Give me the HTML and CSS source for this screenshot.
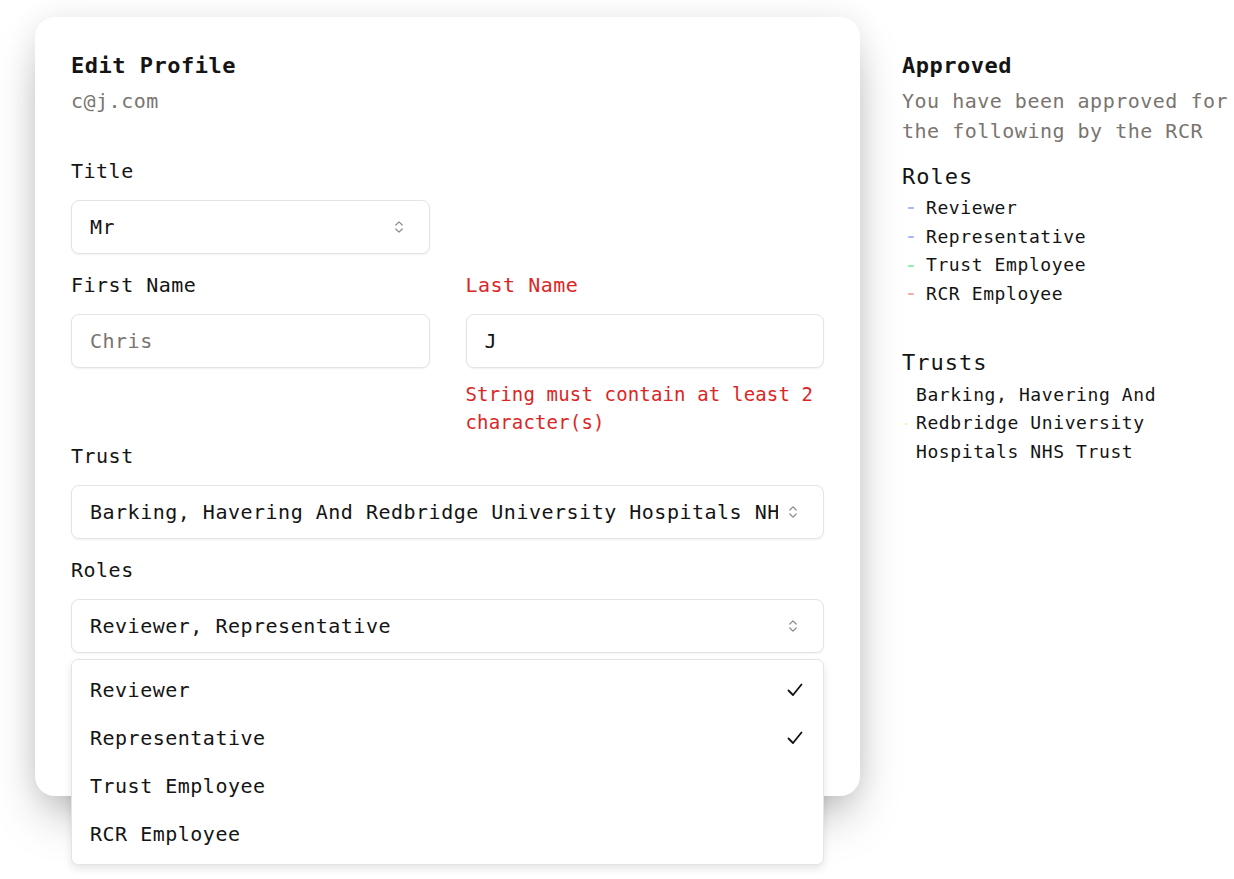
FILE: index.html
```html
<!DOCTYPE html>
<html lang="en">
<head>
<meta charset="utf-8">
<title>Edit Profile</title>
<link rel="stylesheet" href="styles.css">
</head>
<body>
<div class="page">
  <section class="card">
    <h1 class="card-title">Edit Profile</h1>
    <p class="email">c@j.com</p>

    <div class="form">
      <div class="field field-title">
        <label class="label">Title</label>
        <div class="select">
          <span class="select-value">Mr</span>
          <svg class="chev" width="10" height="16" viewBox="0 0 10 16"><path d="M1.8 6 L5 2.8 L8.2 6 M1.8 10 L5 13.2 L8.2 10" fill="none" stroke="#8a8a8a" stroke-width="1.2" stroke-linecap="round" stroke-linejoin="round"/></svg>
        </div>
      </div>

      <div class="field field-first">
        <label class="label">First Name</label>
        <div class="input"><span class="placeholder">Chris</span></div>
      </div>
      <div class="field field-last">
        <label class="label label-error">Last Name</label>
        <div class="input"><span class="input-value">J</span></div>
        <p class="error">String must contain at least 2 character(s)</p>
      </div>

      <div class="field field-wide field-trust">
        <label class="label">Trust</label>
        <div class="select">
          <span class="select-value">Barking, Havering And Redbridge University Hospitals NHS Trust</span>
          <svg class="chev" width="10" height="16" viewBox="0 0 10 16"><path d="M1.8 6 L5 2.8 L8.2 6 M1.8 10 L5 13.2 L8.2 10" fill="none" stroke="#8a8a8a" stroke-width="1.2" stroke-linecap="round" stroke-linejoin="round"/></svg>
        </div>
      </div>

      <div class="field field-wide field-roles">
        <label class="label">Roles</label>
        <div class="select-wrap">
          <div class="select">
            <span class="select-value">Reviewer, Representative</span>
            <svg class="chev" width="10" height="16" viewBox="0 0 10 16"><path d="M1.8 6 L5 2.8 L8.2 6 M1.8 10 L5 13.2 L8.2 10" fill="none" stroke="#8a8a8a" stroke-width="1.2" stroke-linecap="round" stroke-linejoin="round"/></svg>
          </div>
          <ul class="menu">
            <li class="menu-item"><span>Reviewer</span><svg class="check" width="16" height="14" viewBox="0 0 16 14"><path d="M1.5 7.5 L6 12 L14.5 1.5" fill="none" stroke="#111" stroke-width="1.8" stroke-linecap="round" stroke-linejoin="round"/></svg></li>
            <li class="menu-item"><span>Representative</span><svg class="check" width="16" height="14" viewBox="0 0 16 14"><path d="M1.5 7.5 L6 12 L14.5 1.5" fill="none" stroke="#111" stroke-width="1.8" stroke-linecap="round" stroke-linejoin="round"/></svg></li>
            <li class="menu-item"><span>Trust Employee</span></li>
            <li class="menu-item"><span>RCR Employee</span></li>
          </ul>
        </div>
      </div>

      <div class="actions field-wide">
        <button class="save">Save</button>
      </div>
    </div>
  </section>

  <aside class="approved">
    <h2 class="approved-title">Approved</h2>
    <p class="approved-desc">You have been approved for the following by the RCR</p>

    <h3 class="approved-sub">Roles</h3>
    <ul class="tag-list">
      <li class="tag"><span class="dash dash-indigo"></span>Reviewer</li>
      <li class="tag"><span class="dash dash-indigo"></span>Representative</li>
      <li class="tag"><span class="dash dash-green"></span>Trust Employee</li>
      <li class="tag"><span class="dash dash-red"></span>RCR Employee</li>
    </ul>

    <h3 class="approved-sub approved-sub-trusts">Trusts</h3>
    <ul class="tag-list trust-list">
      <li class="tag tag-trust"><span class="dash dash-yellow dash-thin"></span><span class="tag-text">Barking, Havering And Redbridge University Hospitals NHS Trust</span></li>
    </ul>
  </aside>
</div>
</body>
</html>
```

FILE: styles.css
```css
* { box-sizing: border-box; }

html, body {
  margin: 0;
  padding: 0;
  background: #ffffff;
}

body {
  min-height: 879px;
  font-family: "DejaVu Sans Mono", "Liberation Mono", monospace;
  color: #141414;
  font-size: 20px;
  letter-spacing: 0.5px;
}

.page {
  display: flex;
  align-items: flex-start;
  padding: 17px 0 83px 35px;
}

/* ---------- card ---------- */
.card {
  width: 825px;
  flex: none;
  background: #fff;
  border-radius: 20px;
  padding: 34px 36px 34px;
  box-shadow: 0 25px 50px -12px rgba(0, 0, 0, 0.34), 0 0 30px rgba(0, 0, 0, 0.07);
}

.card-title {
  margin: 0;
  font-size: 22px;
  line-height: 28px;
  padding-top: 1px;
  font-weight: 700;
  letter-spacing: 0.5px;
}

.email {
  margin: 6px 0 0;
  line-height: 30px;
  color: #7a7470;
}

.form {
  display: grid;
  grid-template-columns: 1fr 1fr;
  column-gap: 36px;
  margin-top: 41px;
}

.field { display: flex; flex-direction: column; }
.field-title { grid-column: 1; }
.field-first { grid-column: 1; margin-top: 17px; }
.field-last { grid-column: 2; margin-top: 17px; }
.field-wide { grid-column: 1 / span 2; }
.field-trust { margin-top: 6px; }
.field-roles { margin-top: 17px; }

.label {
  line-height: 28px;
}
.label-error { color: #dc2626; }

.select,
.input {
  margin-top: 15px;
  height: 54px;
  border: 1px solid #e4e4e4;
  border-radius: 8px;
  background: #fff;
  box-shadow: 0 1px 2px rgba(0, 0, 0, 0.06);
  display: flex;
  align-items: center;
  padding: 0 25px 0 18px;
}

.select-value {
  flex: 1;
  min-width: 0;
  white-space: nowrap;
  overflow: hidden;
}

.chev { flex: none; margin-left: 10px; }

.placeholder { color: #7a7470; }

.error {
  margin: 12px 0 0;
  color: #dc2626;
  font-size: 19px;
  letter-spacing: 0.15px;
  line-height: 28px;
}

.select-wrap { position: relative; }

.menu {
  position: absolute;
  z-index: 5;
  top: calc(100% + 6px);
  left: 0;
  right: 0;
  margin: 0;
  padding: 6px 0;
  list-style: none;
  background: #fff;
  border: 1px solid #e4e4e4;
  border-radius: 7px;
  box-shadow: 0 4px 8px rgba(0, 0, 0, 0.1);
}

.menu-item {
  height: 48px;
  display: flex;
  align-items: center;
  justify-content: space-between;
  padding: 0 20px 0 18px;
}

.actions {
  margin-top: 36px;
  margin-bottom: 25px;
}

.save {
  height: 48px;
  padding: 0 24px;
  border: 0;
  border-radius: 8px;
  background: #111;
  color: #fff;
  font: inherit;
}

/* ---------- right column ---------- */
.approved {
  margin-left: 42px;
  width: 332px;
  flex: none;
  padding-top: 35px;
}

.approved-title {
  margin: 0;
  font-size: 22px;
  line-height: 28px;
  font-weight: 700;
  letter-spacing: 0.5px;
}

.approved-desc {
  margin: 6px 0 0;
  line-height: 30px;
  color: #7a7470;
}

.approved-sub {
  margin: 15px 0 0;
  font-size: 22px;
  line-height: 32px;
  font-weight: 400;
  letter-spacing: 1px;
}
.approved-sub-trusts { margin-top: 38px; }

.tag-list {
  list-style: none;
  margin: 1px 0 0;
  padding: 0;
}

.trust-list { margin-top: 2px; }

.tag {
  display: flex;
  align-items: center;
  font-size: 18px;
  letter-spacing: 0.6px;
  line-height: 28.7px;
}

.tag-trust { line-height: 28.5px; }

.dash {
  flex: none;
  width: 6px;
  height: 2px;
  margin: 0 12px 0 6px;
  border-radius: 1px;
}
.dash-thin { width: 2px; margin: 0 9px 0 3px; }

.dash-indigo { background: #a5b4fc; }
.dash-green { background: #86efac; }
.dash-red { background: #fca5a5; }
.dash-yellow { background: #fde68a; }

.tag-text { flex: 1; }
```
